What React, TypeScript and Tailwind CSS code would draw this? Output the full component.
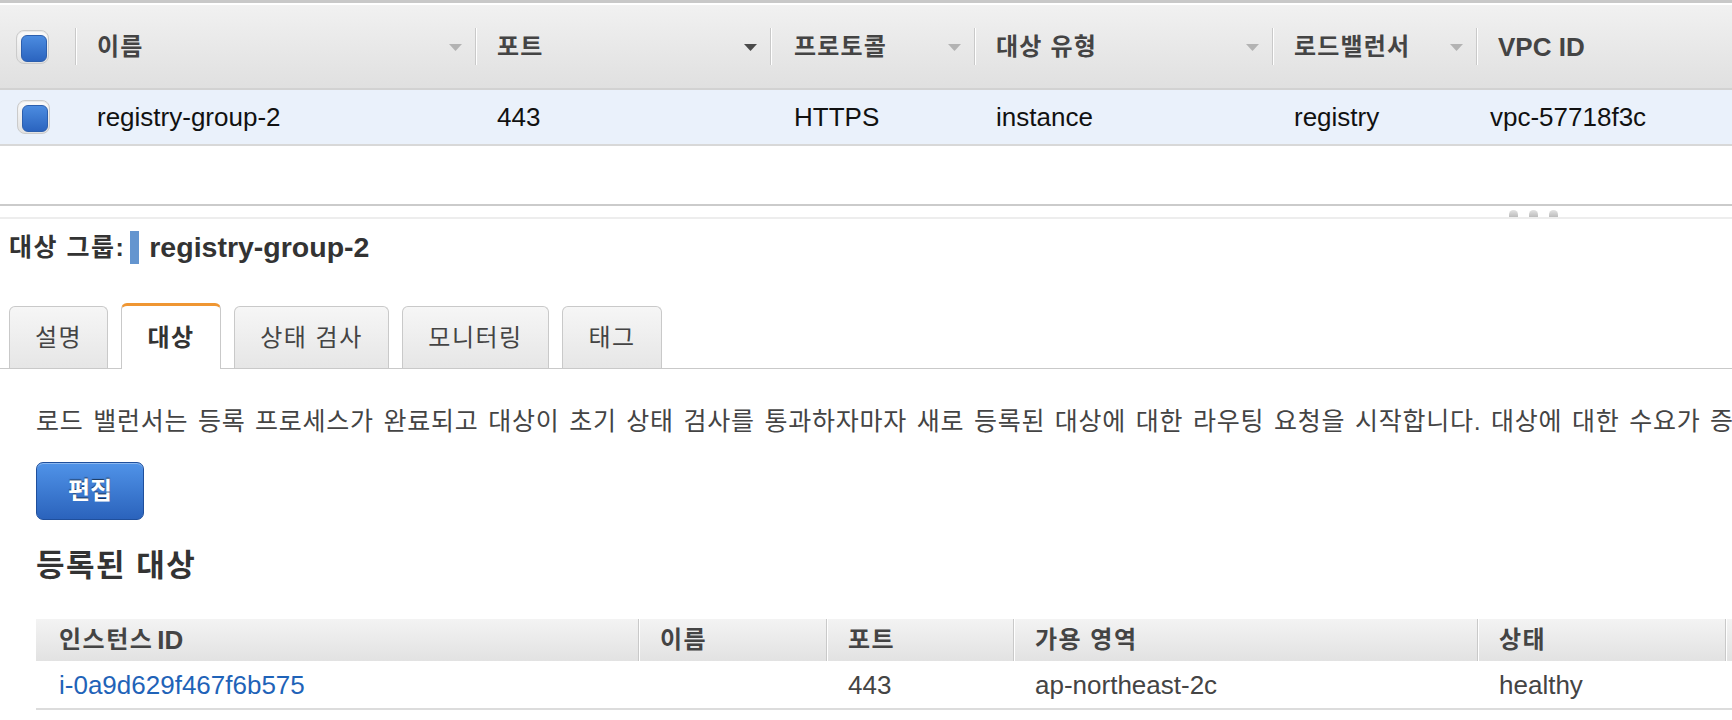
import React from "react";

const FONT = "font-['Liberation_Sans','Noto_Sans_CJK_KR',sans-serif]";

function Checkbox() {
  return (
    <div className="w-[33px] h-[34px] rounded-[8px] border border-[#cbcbcb] bg-gradient-to-b from-[#fbfbfb] to-[#e2e2e2] pl-[4px] pt-[4px] shadow-[inset_0_1px_1px_rgba(0,0,0,0.08)]">
      <div className="w-[26px] h-[27px] rounded-[6px] bg-gradient-to-b from-[#4c8ce0] to-[#2b64bf] border border-[#2c5fae]" />
    </div>
  );
}

function Tri({ dark }: { dark?: boolean }) {
  return (
    <svg width="13" height="7" viewBox="0 0 13 7" className="shrink-0 mt-[2px]">
      <path d="M0 0 L13 0 L6.5 7 Z" fill={dark ? "#4a4a4a" : "#b3b3b3"} />
    </svg>
  );
}

function Sep({ h = "h-[37px]" }: { h?: string }) {
  return <div className={`w-[2px] ${h} border-l border-[#c9c9c9] bg-white shrink-0`} />;
}

function HeadCell({ w, label, dark, noTri, pl = "pl-[20px]" }: { w: string; label: React.ReactNode; dark?: boolean; noTri?: boolean; pl?: string }) {
  return (
    <div className={`${w} h-full flex items-center justify-between ${pl} pr-[13px] shrink-0`}>
      <span className="text-[24px] font-bold text-[#444] leading-none tracking-[1.2px]">{label}</span>
      {!noTri && <Tri dark={dark} />}
    </div>
  );
}

function RowCell({ w, children }: { w: string; children: React.ReactNode }) {
  return (
    <div className={`${w} h-full flex items-center pl-[20px] shrink-0 text-[26px] text-[#111] leading-none`}>
      {children}
    </div>
  );
}

function Tab({ label, active, w }: { label: string; active?: boolean; w: string }) {
  if (active) {
    return (
      <div className={`h-[66px] ${w} -mb-px bg-white border-t-[3px] border-t-[#ef9632] border-x border-x-[#c9c9c9] rounded-t-[6px] flex items-center justify-center text-[24px] font-bold text-[#333] tracking-[1.5px]`}>
        {label}
      </div>
    );
  }
  return (
    <div className={`h-[62px] ${w} bg-gradient-to-b from-[#f6f6f6] to-[#e6e6e6] border border-b-0 border-[#c9c9c9] rounded-t-[6px] flex items-center justify-center text-[24px] text-[#444] tracking-[1.5px]`}>
      {label}
    </div>
  );
}

function BHead({ w, children, pl = "pl-[20px]" }: { w: string; children: React.ReactNode; pl?: string }) {
  return (
    <div className={`${w} h-full flex items-center ${pl} shrink-0 text-[24px] font-bold text-[#444] leading-none tracking-[1.5px]`}>
      {children}
    </div>
  );
}

function BCell({ w, children, pl = "pl-[20px]", link }: { w: string; children?: React.ReactNode; pl?: string; link?: boolean }) {
  return (
    <div className={`${w} h-full flex items-center ${pl} shrink-0 text-[26px] leading-none ${link ? "text-[#1f63b8]" : "text-[#444]"}`}>
      {children}
    </div>
  );
}

export default function App() {
  return (
    <div className={`w-[1732px] h-[720px] overflow-hidden bg-white ${FONT}`}>
      {/* top table */}
      <div className="h-[3px] bg-[#c8c8c8]" />
      <div className="h-[2px] bg-white" />
      <div className="h-[85px] flex items-center bg-gradient-to-b from-[#f1f1f1] to-[#e0e0e0] border-b-2 border-[#d2d2d2]">
        <div className="w-[75px] h-full flex items-center pl-[16px] shrink-0">
          <Checkbox />
        </div>
        <Sep />
        <HeadCell w="w-[398px]" label="이름" />
        <Sep />
        <HeadCell w="w-[293px]" label="포트" dark />
        <Sep />
        <HeadCell w="w-[202px]" label="프로토콜" pl="pl-[22px]" />
        <Sep />
        <HeadCell w="w-[296px]" label="대상 유형" />
        <Sep />
        <HeadCell w="w-[202px]" label="로드밸런서" />
        <Sep />
        <HeadCell w="w-[200px]" label={<span className="text-[26px] tracking-normal">VPC ID</span>} noTri />
      </div>
      <div className="h-[56px] flex items-center bg-[#eaf1fb] border-b-2 border-[#d8d8d8]">
        <div className="w-[77px] h-full flex items-center pl-[17px] shrink-0">
          <Checkbox />
        </div>
        <RowCell w="w-[400px]">registry-group-2</RowCell>
        <RowCell w="w-[297px]">443</RowCell>
        <RowCell w="w-[202px]">HTTPS</RowCell>
        <RowCell w="w-[298px]">instance</RowCell>
        <RowCell w="w-[196px]">registry</RowCell>
        <RowCell w="w-[220px]">vpc-57718f3c</RowCell>
      </div>
      <div className="h-[58px] bg-white" />
      <div className="h-[2px] bg-[#cbcbcb]" />
      <div className="h-[11px] flex justify-end items-end gap-[11px] pr-[174px]">
        <div className="w-[9px] h-[7px] rounded-t-full bg-gradient-to-b from-[#e2e2e2] to-[#bdbdbd]" />
        <div className="w-[9px] h-[7px] rounded-t-full bg-gradient-to-b from-[#e2e2e2] to-[#bdbdbd]" />
        <div className="w-[9px] h-[7px] rounded-t-full bg-gradient-to-b from-[#e2e2e2] to-[#bdbdbd]" />
      </div>
      <div className="h-[2px] bg-[#ededed]" />

      {/* title */}
      <div className="h-[56px] flex items-center pl-[9px]">
        <span className="text-[25px] font-bold text-[#333] leading-none tracking-[1.5px]">대상 그룹:</span>
        <div className="w-[9px] h-[33px] bg-[#6495cf] ml-[5px] mr-[10px]" />
        <span className="text-[28.5px] font-bold text-[#333] leading-none">registry-group-2</span>
      </div>

      {/* tabs */}
      <div className="mt-[28px] h-[66px] flex items-end gap-[13px] pl-[9px] border-b border-[#c9c9c9]">
        <Tab label="설명" w="w-[99px]" />
        <Tab label="대상" w="w-[100px]" active />
        <Tab label="상태 검사" w="w-[155px]" />
        <Tab label="모니터링" w="w-[147px]" />
        <Tab label="태그" w="w-[100px]" />
      </div>

      {/* content */}
      <div className="pl-[36px]">
        <p className="mt-[37px] h-[30px] leading-[30px] text-[25px] text-[#444] whitespace-nowrap overflow-hidden tracking-[0.75px] [word-spacing:2px]">
          로드 밸런서는 등록 프로세스가 완료되고 대상이 초기 상태 검사를 통과하자마자 새로 등록된 대상에 대한 라우팅 요청을 시작합니다. 대상에 대한 수요가 증가하면 대상을 추가할 수 있습니다.
        </p>
        <button className="mt-[26px] w-[108px] h-[58px] rounded-[7px] border border-[#1f4f9c] bg-gradient-to-b from-[#5093e8] to-[#2b63bc] shadow-[inset_0_1px_0_rgba(255,255,255,0.35)] text-white text-[24px] font-bold [text-shadow:0_-1px_1px_rgba(0,0,0,0.6)] flex items-center justify-center">
          편집
        </button>
        <h2 className="mt-[26px] h-[40px] leading-[40px] text-[31px] font-bold text-[#333] tracking-[1.5px]">등록된 대상</h2>

        {/* bottom table */}
        <div className="mt-[33px] h-[42px] flex items-stretch bg-gradient-to-b from-[#f3f3f3] to-[#e2e2e2]">
          <BHead w="w-[602px]" pl="pl-[23px]">
            인스턴스 <span className="text-[26px] ml-[4px] tracking-normal">ID</span>
          </BHead>
          <Sep h="h-full" />
          <BHead w="w-[186px]">이름</BHead>
          <Sep h="h-full" />
          <BHead w="w-[185px]">포트</BHead>
          <Sep h="h-full" />
          <BHead w="w-[462px]">가용 영역</BHead>
          <Sep h="h-full" />
          <BHead w="w-[246px]">상태</BHead>
          <Sep h="h-full" />
          <div className="flex-1" />
        </div>
        <div className="h-[49px] flex items-stretch border-b-2 border-[#dcdcdc]">
          <BCell w="w-[604px]" pl="pl-[23px]" link>i-0a9d629f467f6b575</BCell>
          <BCell w="w-[188px]" />
          <BCell w="w-[187px]">443</BCell>
          <BCell w="w-[464px]">ap-northeast-2c</BCell>
          <BCell w="w-[248px]">healthy</BCell>
        </div>
      </div>
    </div>
  );
}
